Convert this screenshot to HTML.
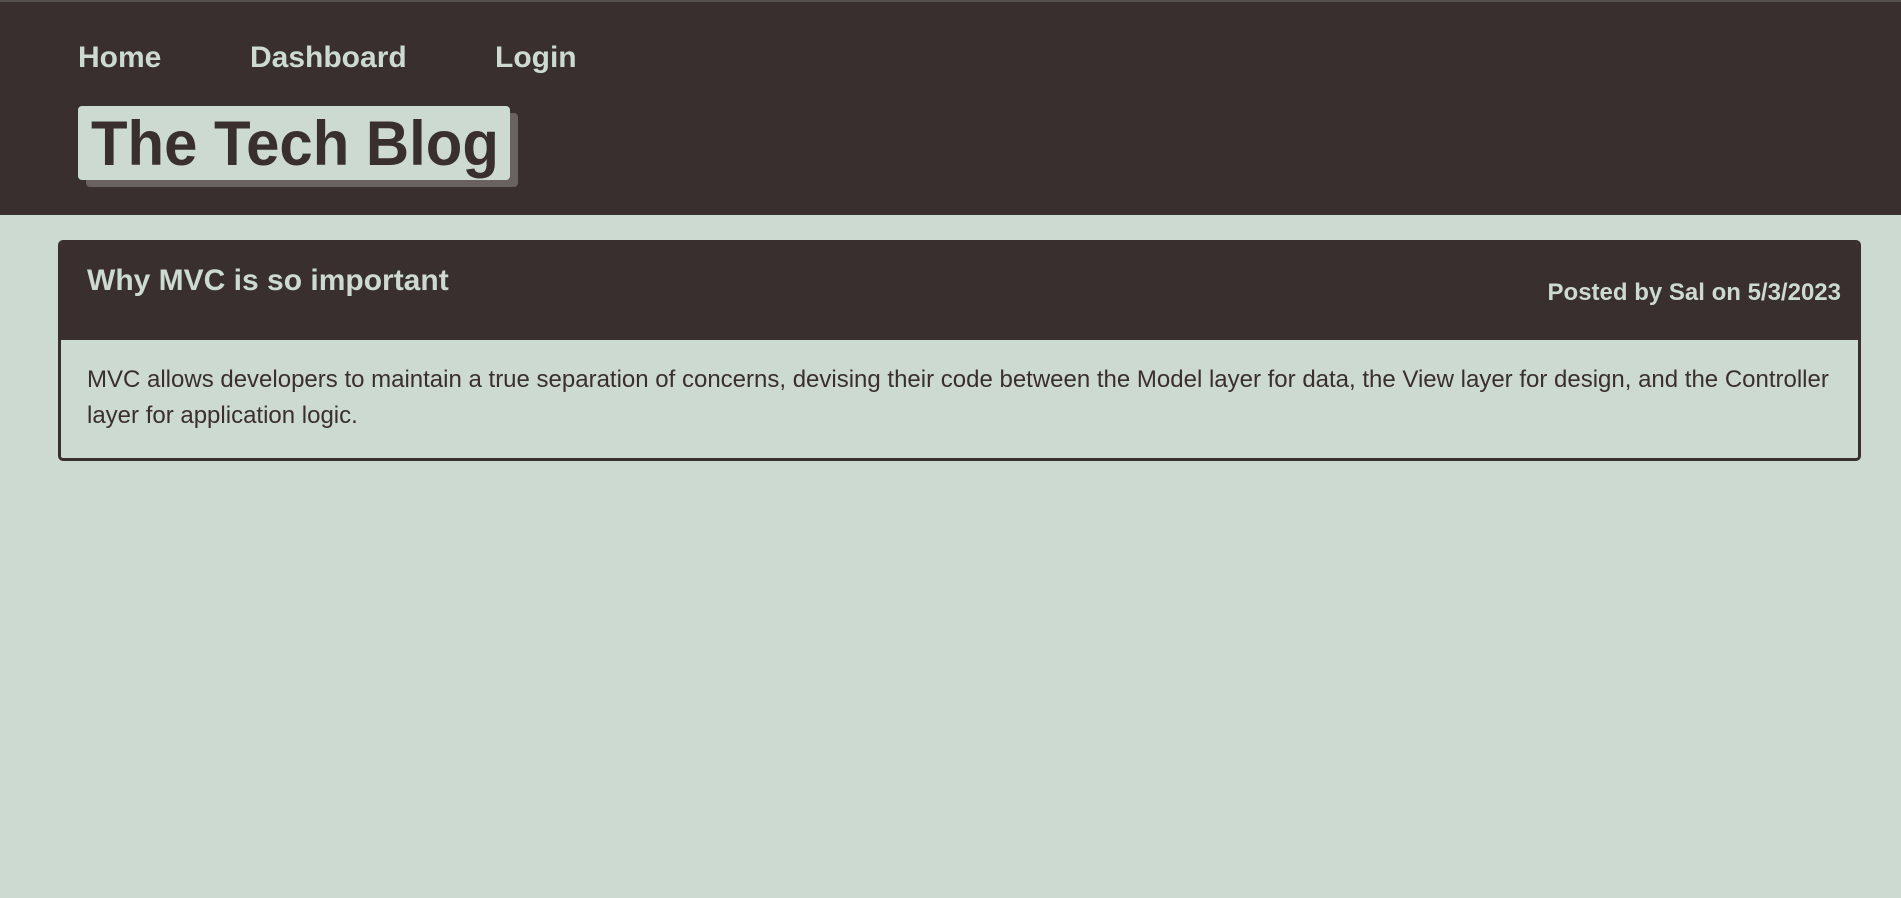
<!DOCTYPE html>
<html><head><meta charset="utf-8"><style>
*{margin:0;padding:0;box-sizing:border-box}
body{width:1901px;height:898px;background:#cddad1;font-family:"Liberation Sans",Arial,sans-serif;overflow:hidden;position:relative}
header{position:absolute;left:0;top:0;width:1901px;height:215px;background:#3a2f2f;border-top:2px solid #55504e}
nav a{position:absolute;top:39px;font-size:30px;font-weight:bold;color:#cddad1;text-decoration:none}
.title{position:absolute;left:78px;top:104px;width:432px;height:74px;background:#cddad1;border-radius:4px;box-shadow:8px 7px 0 #6a6260}
.title h1{position:absolute;left:13px;top:2px;font-size:63px;color:#3a2f2f;font-weight:bold;white-space:nowrap;transform:scaleX(0.95);transform-origin:left top}
.card{position:absolute;left:58px;top:240px;width:1803px;height:221px;border:3px solid #3a2f2f;border-radius:5px;overflow:hidden}
.ch{height:97px;background:#3a2f2f;position:relative}
.ch h2{position:absolute;left:26px;top:21px;font-size:30px;color:#cddad1}
.ch span{position:absolute;right:17px;top:36px;font-size:24px;font-weight:bold;color:#cddad1}
.cb{padding:22px 26px;font-size:24px;line-height:36px;color:#3a2f2f}
</style></head><body>
<header>
<nav><a style="left:78px">Home</a><a style="left:250px">Dashboard</a><a style="left:495px">Login</a></nav>
<div class="title"><h1>The Tech Blog</h1></div>
</header>
<div class="card">
<div class="ch"><h2>Why MVC is so important</h2><span>Posted by Sal on 5/3/2023</span></div>
<div class="cb">MVC allows developers to maintain a true separation of concerns, devising their code between the Model layer for data, the View layer for design, and the Controller layer for application logic.</div>
</div>
</body></html>
